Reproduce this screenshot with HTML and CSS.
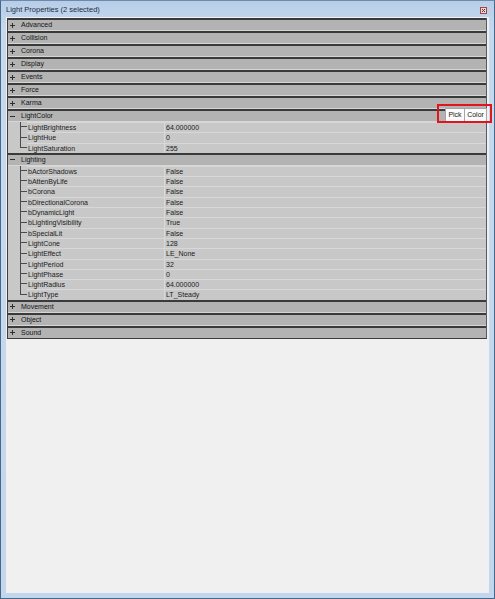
FILE: index.html
```html
<!DOCTYPE html>
<html>
<head>
<meta charset="utf-8">
<title>Light Properties</title>
<link rel="stylesheet" href="styles.css">
</head>
<body>
<div class="window">
  <div class="titlebar">
    <span class="title">Light Properties (2 selected)</span>
    <span class="close">
      <svg width="7" height="7" viewBox="0 0 7 7"><rect x="0.5" y="0.5" width="6" height="6" fill="#ecd6d6" stroke="#9c4848"/><path d="M2 2 L5 5 M5 2 L2 5" stroke="#7a2a2a" stroke-width="1"/></svg>
    </span>
  </div>
  <div class="client">
    <div class="grid">
      <div class="cat"><span class="exp"><svg width="7" height="7" viewBox="0 0 7 7"><path d="M1 3.5 H6 M3.5 1 V6" stroke="#303030"/></svg></span><span class="label">Advanced</span></div>
      <div class="cat"><span class="exp"><svg width="7" height="7" viewBox="0 0 7 7"><path d="M1 3.5 H6 M3.5 1 V6" stroke="#303030"/></svg></span><span class="label">Collision</span></div>
      <div class="cat"><span class="exp"><svg width="7" height="7" viewBox="0 0 7 7"><path d="M1 3.5 H6 M3.5 1 V6" stroke="#303030"/></svg></span><span class="label">Corona</span></div>
      <div class="cat"><span class="exp"><svg width="7" height="7" viewBox="0 0 7 7"><path d="M1 3.5 H6 M3.5 1 V6" stroke="#303030"/></svg></span><span class="label">Display</span></div>
      <div class="cat"><span class="exp"><svg width="7" height="7" viewBox="0 0 7 7"><path d="M1 3.5 H6 M3.5 1 V6" stroke="#303030"/></svg></span><span class="label">Events</span></div>
      <div class="cat"><span class="exp"><svg width="7" height="7" viewBox="0 0 7 7"><path d="M1 3.5 H6 M3.5 1 V6" stroke="#303030"/></svg></span><span class="label">Force</span></div>
      <div class="cat"><span class="exp"><svg width="7" height="7" viewBox="0 0 7 7"><path d="M1 3.5 H6 M3.5 1 V6" stroke="#303030"/></svg></span><span class="label">Karma</span></div>
      <div class="cat has-picker"><span class="exp"><svg width="7" height="7" viewBox="0 0 7 7"><path d="M1 3.5 H6" stroke="#303030"/></svg></span><span class="label">LightColor</span>
        <div class="picker"><span class="btn pick">Pick</span><span class="btn">Color</span></div>
        <div class="highlight"></div>
      </div>
      <div class="prop"><span class="tree"><i class="up"></i><i class="down"></i></span><span class="name">LightBrightness</span><span class="value">64.000000</span></div>
      <div class="prop"><span class="tree"><i class="up"></i><i class="down"></i></span><span class="name">LightHue</span><span class="value">0</span></div>
      <div class="prop last"><span class="tree"><i class="up"></i><i class="down"></i></span><span class="name">LightSaturation</span><span class="value">255</span></div>
      <div class="cat"><span class="exp"><svg width="7" height="7" viewBox="0 0 7 7"><path d="M1 3.5 H6" stroke="#303030"/></svg></span><span class="label">Lighting</span></div>
      <div class="prop"><span class="tree"><i class="up"></i><i class="down"></i></span><span class="name">bActorShadows</span><span class="value">False</span></div>
      <div class="prop"><span class="tree"><i class="up"></i><i class="down"></i></span><span class="name">bAttenByLife</span><span class="value">False</span></div>
      <div class="prop"><span class="tree"><i class="up"></i><i class="down"></i></span><span class="name">bCorona</span><span class="value">False</span></div>
      <div class="prop"><span class="tree"><i class="up"></i><i class="down"></i></span><span class="name">bDirectionalCorona</span><span class="value">False</span></div>
      <div class="prop"><span class="tree"><i class="up"></i><i class="down"></i></span><span class="name">bDynamicLight</span><span class="value">False</span></div>
      <div class="prop"><span class="tree"><i class="up"></i><i class="down"></i></span><span class="name">bLightingVisibility</span><span class="value">True</span></div>
      <div class="prop"><span class="tree"><i class="up"></i><i class="down"></i></span><span class="name">bSpecialLit</span><span class="value">False</span></div>
      <div class="prop"><span class="tree"><i class="up"></i><i class="down"></i></span><span class="name">LightCone</span><span class="value">128</span></div>
      <div class="prop"><span class="tree"><i class="up"></i><i class="down"></i></span><span class="name">LightEffect</span><span class="value">LE_None</span></div>
      <div class="prop"><span class="tree"><i class="up"></i><i class="down"></i></span><span class="name">LightPeriod</span><span class="value">32</span></div>
      <div class="prop"><span class="tree"><i class="up"></i><i class="down"></i></span><span class="name">LightPhase</span><span class="value">0</span></div>
      <div class="prop"><span class="tree"><i class="up"></i><i class="down"></i></span><span class="name">LightRadius</span><span class="value">64.000000</span></div>
      <div class="prop last"><span class="tree"><i class="up"></i><i class="down"></i></span><span class="name">LightType</span><span class="value">LT_Steady</span></div>
      <div class="cat"><span class="exp"><svg width="7" height="7" viewBox="0 0 7 7"><path d="M1 3.5 H6 M3.5 1 V6" stroke="#303030"/></svg></span><span class="label">Movement</span></div>
      <div class="cat"><span class="exp"><svg width="7" height="7" viewBox="0 0 7 7"><path d="M1 3.5 H6 M3.5 1 V6" stroke="#303030"/></svg></span><span class="label">Object</span></div>
      <div class="cat"><span class="exp"><svg width="7" height="7" viewBox="0 0 7 7"><path d="M1 3.5 H6 M3.5 1 V6" stroke="#303030"/></svg></span><span class="label">Sound</span></div>
    </div>
  </div>
</div>
</body>
</html>
```

FILE: styles.css
```css
* {
  box-sizing: border-box;
}

html, body {
  margin: 0;
  padding: 0;
  background: #f0f0f0;
}

body {
  font-family: "Liberation Sans", Arial, sans-serif;
  font-size: 7px;
  color: #1a1a1a;
}

/* window frame */
.window {
  width: 495px;
  height: 599px;
  display: flex;
  flex-direction: column;
  border: 1px solid #46698a;
  border-top-color: #6d8aa8;
  background: linear-gradient(#b8cee8, #c6d9ef 30px, #c2d6ee);
  padding: 0 5px 5px 4px;
}

.titlebar {
  height: 16px;
  display: flex;
  align-items: center;
  padding: 1px 1px 0 1px;
}

.title {
  flex: 1;
  font-size: 7.5px;
  color: #1c2c44;
  white-space: nowrap;
}

.close {
  display: flex;
  width: 7px;
  height: 7px;
  margin-right: 1px;
  margin-top: 1px;
}

.client {
  flex: 1;
  background: #f0f0f0;
  border-left: 1px solid #cdd5e4;
  padding: 1px 2px 0 1px;
}

/* property grid */
.grid {
  border-left: 1px solid #3c3c3c;
  border-right: 1px solid #5a5a5a;
  border-bottom: 1px solid #3c3c3c;
  background: #c8c8c8;
}

.cat {
  position: relative;
  height: 13px;
  display: flex;
  align-items: center;
  background: #b3b3b3;
  border-top: 2px solid #3a3a3a;
  border-bottom: 1px solid #d6d6d6;
  line-height: 10px;
}

.cat:last-child {
  border-bottom: 0;
  height: 12px;
}

.exp {
  display: flex;
  width: 7px;
  height: 7px;
  margin-left: 1px;
}

.label {
  margin-left: 5px;
  color: #141414;
}

.picker {
  position: absolute;
  right: -1px;
  top: -3px;
  height: 14px;
  display: flex;
}

.btn {
  display: flex;
  align-items: center;
  justify-content: center;
  height: 14px;
  background: #fbfbfb;
  border: 1px solid #a6a6a6;
  color: #202020;
  padding: 0 2px;
  width: 23px;
}

.btn.pick {
  width: 19px;
  border-right: 0;
}

.highlight {
  position: absolute;
  left: 429px;
  top: -7px;
  width: 55px;
  height: 19px;
  border: 2px solid #e3141e;
}

.prop {
  height: 10.3px;
  display: flex;
  line-height: 9.3px;
}

.tree {
  width: 19px;
  display: flex;
  flex-direction: column;
  flex-shrink: 0;
}

.tree i {
  display: block;
  margin-left: 12px;
  width: 7px;
  flex: 1;
  border-left: 1px solid #4a4a4a;
}

.tree i.up {
  border-bottom: 1px solid #4a4a4a;
  flex: 0 0 5.3px;
}

.prop.last .tree i.down {
  border-left: 0;
}

.name {
  width: 137px;
  flex-shrink: 0;
  padding-left: 1px;
  border-top: 1px solid #d8d8d8;
  white-space: nowrap;
}

.value {
  flex: 1;
  padding-left: 1px;
  border-top: 1px solid #d8d8d8;
  border-left: 1px solid #dadada;
  white-space: nowrap;
}
```
